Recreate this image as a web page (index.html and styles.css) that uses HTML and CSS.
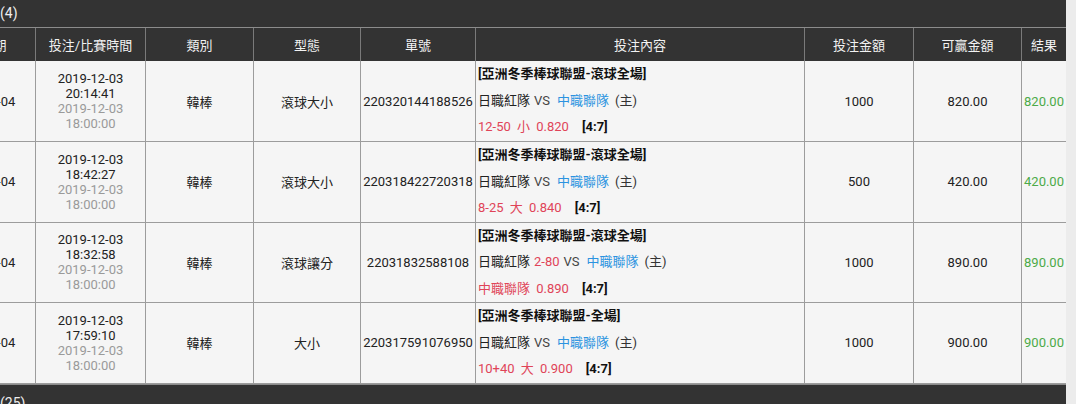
FILE: index.html
```html
<!DOCTYPE html>
<html lang="zh-Hant">
<head>
    <meta charset="UTF-8">
    <meta name="viewport" content="width=device-width, initial-scale=1.0">
    <title>注單紀錄</title>
    <link rel="stylesheet" href="styles.css">
</head>
<body>
    <div class="viewport">
        <div class="board">
            <div class="group-bar"><span class="group-name">今日注單</span>(4)</div>

            <table class="bets">
                <colgroup>
                    <col class="c-date">
                    <col class="c-time">
                    <col class="c-sport">
                    <col class="c-type">
                    <col class="c-no">
                    <col class="c-detail">
                    <col class="c-stake">
                    <col class="c-win">
                    <col class="c-result">
                </colgroup>
                <thead>
                    <tr>
                        <th>帳務日期</th>
                        <th>投注/比賽時間</th>
                        <th>類別</th>
                        <th>型態</th>
                        <th>單號</th>
                        <th>投注內容</th>
                        <th>投注金額</th>
                        <th>可贏金額</th>
                        <th>結果</th>
                    </tr>
                </thead>
                <tbody>
                    <tr>
                        <td>2019-12-04</td>
                        <td class="time">
                            <div>2019-12-03</div>
                            <div>20:14:41</div>
                            <div class="muted">2019-12-03</div>
                            <div class="muted">18:00:00</div>
                        </td>
                        <td>韓棒</td>
                        <td>滾球大小</td>
                        <td>220320144188526</td>
                        <td class="detail">
                            <div class="league">[亞洲冬季棒球聯盟-滾球全場]</div>
                            <div><span>日職紅隊</span><span class="vs">VS</span><span class="home">中職聯隊</span><span class="tag">(主)</span></div>
                            <div><span class="pick">12-50 小 0.820</span><span class="score">[4:7]</span></div>
                        </td>
                        <td>1000</td>
                        <td>820.00</td>
                        <td class="win">820.00</td>
                    </tr>
                    <tr>
                        <td>2019-12-04</td>
                        <td class="time">
                            <div>2019-12-03</div>
                            <div>18:42:27</div>
                            <div class="muted">2019-12-03</div>
                            <div class="muted">18:00:00</div>
                        </td>
                        <td>韓棒</td>
                        <td>滾球大小</td>
                        <td>220318422720318</td>
                        <td class="detail">
                            <div class="league">[亞洲冬季棒球聯盟-滾球全場]</div>
                            <div><span>日職紅隊</span><span class="vs">VS</span><span class="home">中職聯隊</span><span class="tag">(主)</span></div>
                            <div><span class="pick">8-25 大 0.840</span><span class="score">[4:7]</span></div>
                        </td>
                        <td>500</td>
                        <td>420.00</td>
                        <td class="win">420.00</td>
                    </tr>
                    <tr>
                        <td>2019-12-04</td>
                        <td class="time">
                            <div>2019-12-03</div>
                            <div>18:32:58</div>
                            <div class="muted">2019-12-03</div>
                            <div class="muted">18:00:00</div>
                        </td>
                        <td>韓棒</td>
                        <td>滾球讓分</td>
                        <td>22031832588108</td>
                        <td class="detail">
                            <div class="league">[亞洲冬季棒球聯盟-滾球全場]</div>
                            <div><span>日職紅隊</span><span class="line">2-80</span><span class="vs">VS</span><span class="home">中職聯隊</span><span class="tag">(主)</span></div>
                            <div><span class="pick">中職聯隊 0.890</span><span class="score">[4:7]</span></div>
                        </td>
                        <td>1000</td>
                        <td>890.00</td>
                        <td class="win">890.00</td>
                    </tr>
                    <tr>
                        <td>2019-12-04</td>
                        <td class="time">
                            <div>2019-12-03</div>
                            <div>17:59:10</div>
                            <div class="muted">2019-12-03</div>
                            <div class="muted">18:00:00</div>
                        </td>
                        <td>韓棒</td>
                        <td>大小</td>
                        <td>220317591076950</td>
                        <td class="detail">
                            <div class="league">[亞洲冬季棒球聯盟-全場]</div>
                            <div><span>日職紅隊</span><span class="vs">VS</span><span class="home">中職聯隊</span><span class="tag">(主)</span></div>
                            <div><span class="pick">10+40 大 0.900</span><span class="score">[4:7]</span></div>
                        </td>
                        <td>1000</td>
                        <td>900.00</td>
                        <td class="win">900.00</td>
                    </tr>
                </tbody>
            </table>

            <div class="group-bar bottom"><span class="group-name">歷史注單</span>(25)</div>
        </div>
    </div>
</body>
</html>
```

FILE: styles.css
```css
/* Basic Reset */
* {
    margin: 0;
    padding: 0;
    box-sizing: border-box;
}

body {
    font-family: Roboto, "Noto Sans CJK TC", sans-serif;
    font-size: 13px;
    color: #222;
    background: linear-gradient(90deg, #dcdcdc, #ececec 1070px);
    overflow: hidden;
}

/* table is scrolled sideways, first column only partly shown */
.viewport {
    width: 1066px;
    height: 404px;
    overflow: hidden;
}

.board {
    width: 1141px;
    margin-left: -75px;
}

.group-bar {
    height: 28px;
    line-height: 26px;
    padding-left: 19px;
    font-size: 14px;
    color: #eee;
    background: #333;
    border-bottom: 1px solid #8c8c8c;
}

.group-bar.bottom {
    height: 30px;
    border-bottom: none;
    border-top: 1px solid #8c8c8c;
    line-height: 36px;
}

.group-name {
    font-size: 14px;
}

.bets {
    width: 1141px;
    table-layout: fixed;
    border-collapse: collapse;
}

.c-date { width: 110px; }
.c-time { width: 110px; }
.c-sport { width: 108px; }
.c-type { width: 107px; }
.c-no { width: 115px; }
.c-detail { width: 329px; }
.c-stake { width: 109px; }
.c-win { width: 108px; }
.c-result { width: 45px; }

.bets th {
    height: 33px;
    background: #333;
    color: #f2f2f2;
    font-weight: normal;
    font-size: 13px;
    border-left: 1px solid #7a7a7a;
    border-right: 1px solid #7a7a7a;
    white-space: nowrap;
    overflow: hidden;
}

.bets td {
    height: 80.5px;
    padding: 0;
    background: #f5f5f5;
    border: 1px solid #9c9c9c;
    text-align: center;
    vertical-align: middle;
    white-space: nowrap;
    overflow: hidden;
}

.bets td:first-child {
    padding-left: 4px;
}

.bets tbody tr:first-child td {
    border-top: none;
}

.bets td.time {
    line-height: 15px;
}

.muted {
    color: #9a9a9a;
}

.bets td.detail {
    text-align: left;
    padding-left: 2px;
    line-height: 26.5px;
}

.league {
    font-weight: bold;
    color: #111;
}

.vs {
    color: #444;
    margin: 0 7px 0 4px;
}

.line {
    color: #e04458;
    margin-left: 4px;
}

.home {
    color: #2b93e0;
}

.tag {
    color: #333;
    margin-left: 6px;
}

.pick {
    color: #e04458;
    word-spacing: 3px;
}

.score {
    font-weight: bold;
    color: #111;
    margin-left: 13px;
}

.bets td.win {
    color: #4caa48;
}
```
